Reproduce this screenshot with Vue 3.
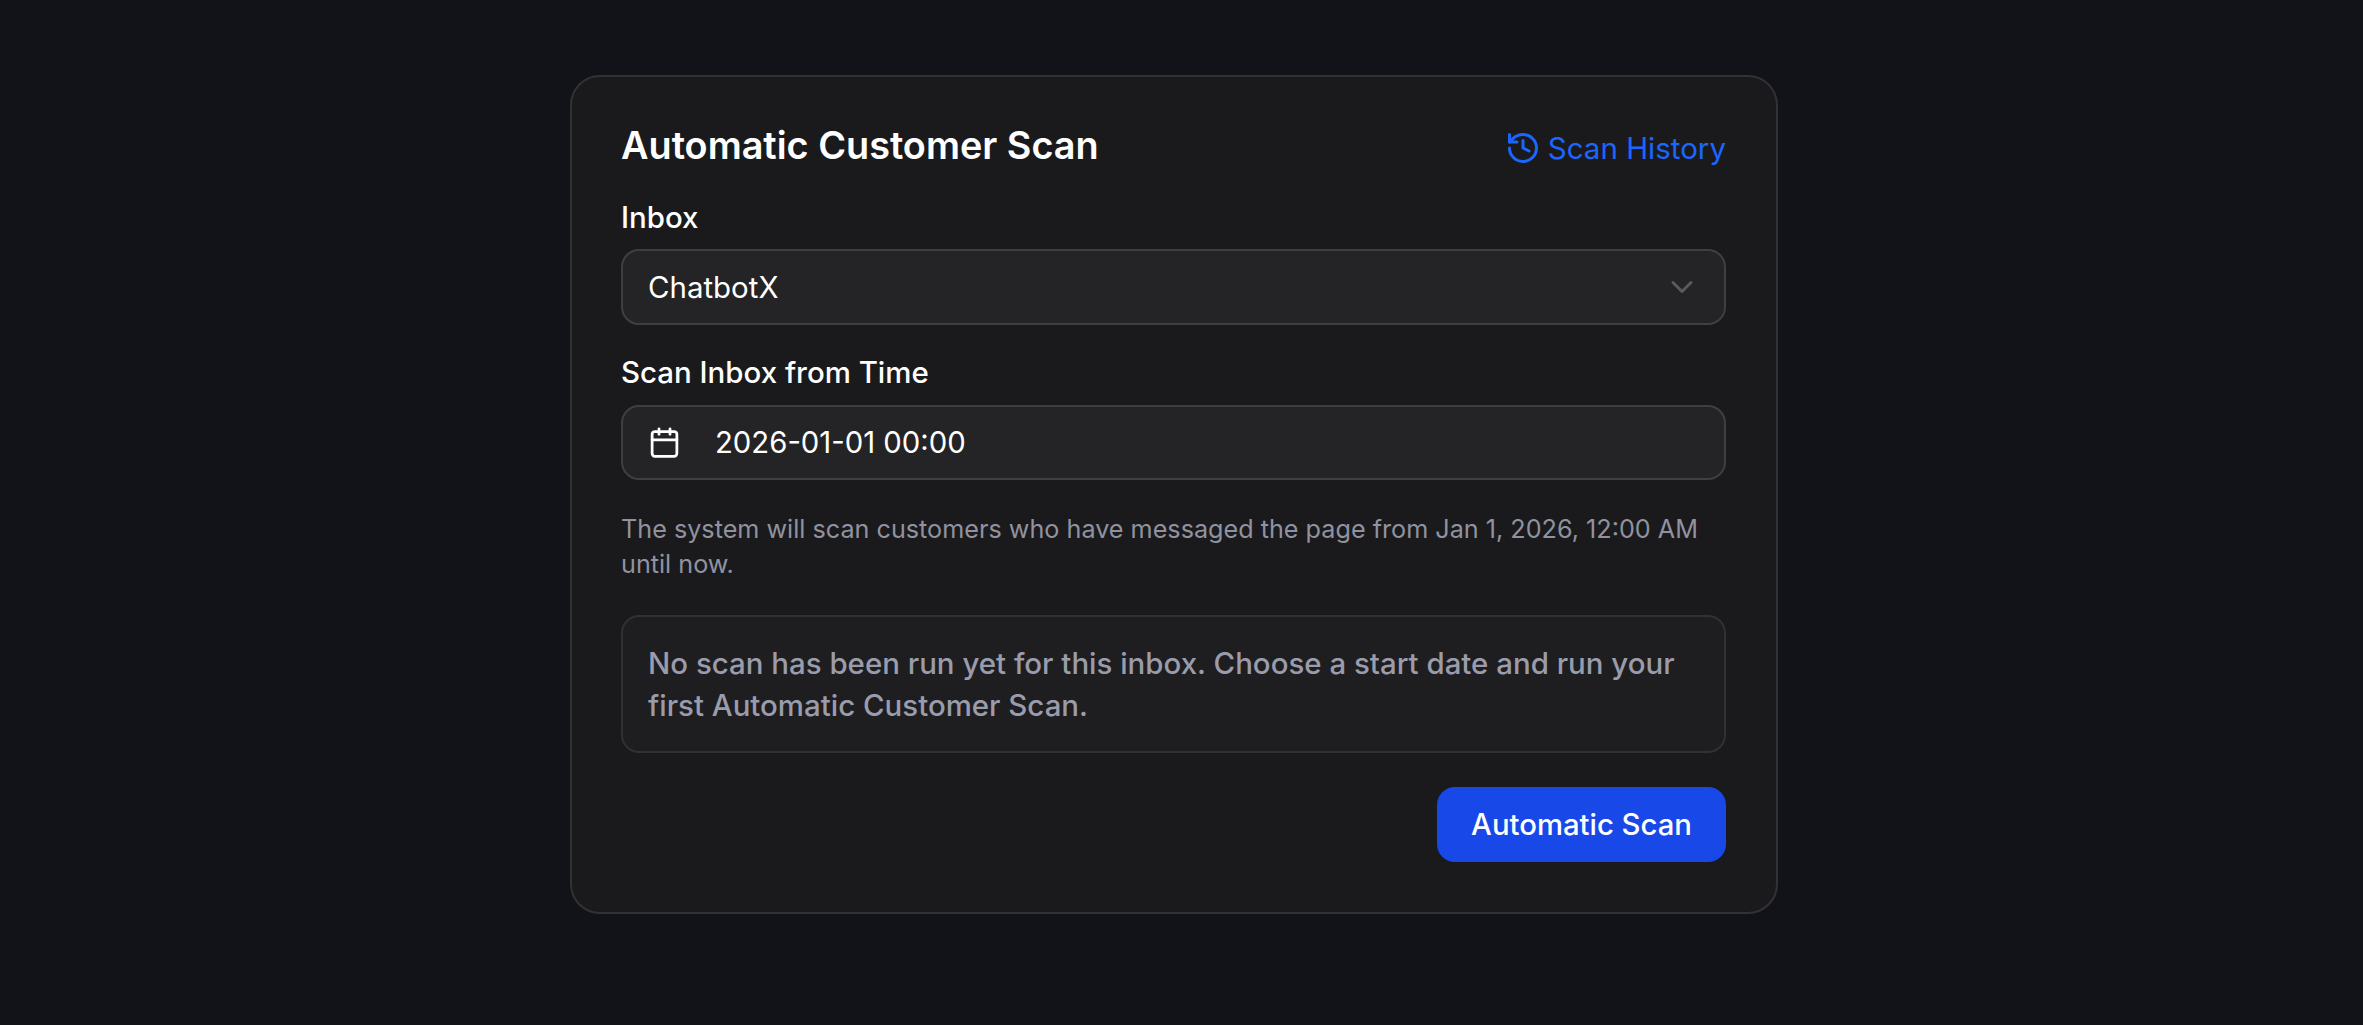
<template>
  <main class="page">
    <section class="card">
      <header class="head">
        <h1 class="title">Automatic Customer Scan</h1>
        <a class="history">
          <svg class="history-icon" viewBox="0 0 24 24" fill="none" stroke="currentColor" stroke-width="2" stroke-linecap="round" stroke-linejoin="round">
            <path d="M3 12a9 9 0 1 0 9-9 9.75 9.75 0 0 0-6.74 2.74L3 8" />
            <path d="M3 3v5h5" />
            <path d="M12 7v5l4 2" />
          </svg>
          <span>Scan History</span>
        </a>
      </header>

      <label class="label first">Inbox</label>
      <div class="field select">
        <span>ChatbotX</span>
        <svg class="chevron" viewBox="0 0 24 24" fill="none" stroke="currentColor" stroke-width="2" stroke-linecap="round" stroke-linejoin="round">
          <path d="m6 9 6 6 6-6" />
        </svg>
      </div>

      <label class="label second">Scan Inbox from Time</label>
      <div class="field date">
        <svg class="calendar" viewBox="0 0 24 24" fill="none" stroke="currentColor" stroke-width="2" stroke-linecap="round" stroke-linejoin="round">
          <path d="M8 2v4" />
          <path d="M16 2v4" />
          <rect x="3" y="4" width="18" height="18" rx="2" />
          <path d="M3 10h18" />
        </svg>
        <span class="date-value">2026-01-01 00:00</span>
      </div>

      <p class="help">The system will scan customers who have messaged the page from Jan 1, 2026, 12:00 AM until now.</p>

      <div class="notice">No scan has been run yet for this inbox. Choose a start date and run your first Automatic Customer Scan.</div>

      <div class="actions">
        <button class="primary" type="button">Automatic Scan</button>
      </div>
    </section>
  </main>
</template>

<script setup>
</script>

<style>
html, body { margin: 0; background: #111318; }
</style>

<style scoped>
.page {
  min-height: 1025px;
  box-sizing: border-box;
  padding: 75px 15px 0 0;
  display: flex;
  justify-content: center;
  align-items: flex-start;
  background: #111318;
  font-family: Inter, "Liberation Sans", sans-serif;
}
.card {
  width: 1208px;
  height: 839px;
  box-sizing: border-box;
  padding: 46px 50px 46px 49px;
  background: #1a1a1c;
  border: 2px solid #323235;
  border-radius: 30px;
  display: flex;
  flex-direction: column;
}
.head {
  display: flex;
  align-items: center;
  justify-content: space-between;
  height: 44px;
}
.title {
  margin: 0;
  font-size: 37.8px;
  line-height: 44px;
  font-weight: 600;
  color: #fff;
}
.history {
  display: flex;
  align-items: center;
  gap: 7px;
  color: #1a66ff;
  font-size: 29.5px;
  line-height: 44px;
  margin-top: 5px;
}
.history-icon { width: 36px; height: 36px; }
.label {
  color: #fff;
  font-size: 29.45px;
  line-height: 42px;
  font-weight: 500;
}
.label.first { margin-top: 29px; }
.label.second { margin-top: 25.5px; }
.field {
  box-sizing: border-box;
  display: flex;
  align-items: center;
  background: #242426;
  border: 2px solid #3f3f43;
  border-radius: 18px;
  color: #fff;
  font-size: 29.45px;
  padding: 0 25px;
}
.select {
  height: 76px;
  margin-top: 11px;
  justify-content: space-between;
  padding-right: 24px;
}
.chevron { width: 36px; height: 36px; color: #59595e; }
.date {
  height: 75px;
  margin-top: 12px;
  gap: 34px;
}
.date-value { font-size: 29.3px; }
.calendar { width: 33px; height: 33px; flex: none; }
.help {
  margin: 32.5px 0 0;
  color: #9092a0;
  font-size: 25.2px;
  line-height: 34.5px;
}
.notice {
  margin-top: 34px;
  height: 138px;
  box-sizing: border-box;
  padding: 25px 25px;
  background: #1e1e20;
  border: 2px solid #313134;
  border-radius: 18px;
  color: #9a9cab;
  font-size: 29.45px;
  line-height: 42px;
  font-weight: 500;
}
.actions {
  margin-top: 33.5px;
  display: flex;
  justify-content: flex-end;
}
.primary {
  height: 75px;
  padding: 0 34px;
  border: 0;
  border-radius: 18px;
  background: #1849e8;
  color: #fff;
  font-family: inherit;
  font-size: 29.3px;
  font-weight: 500;
}
</style>
